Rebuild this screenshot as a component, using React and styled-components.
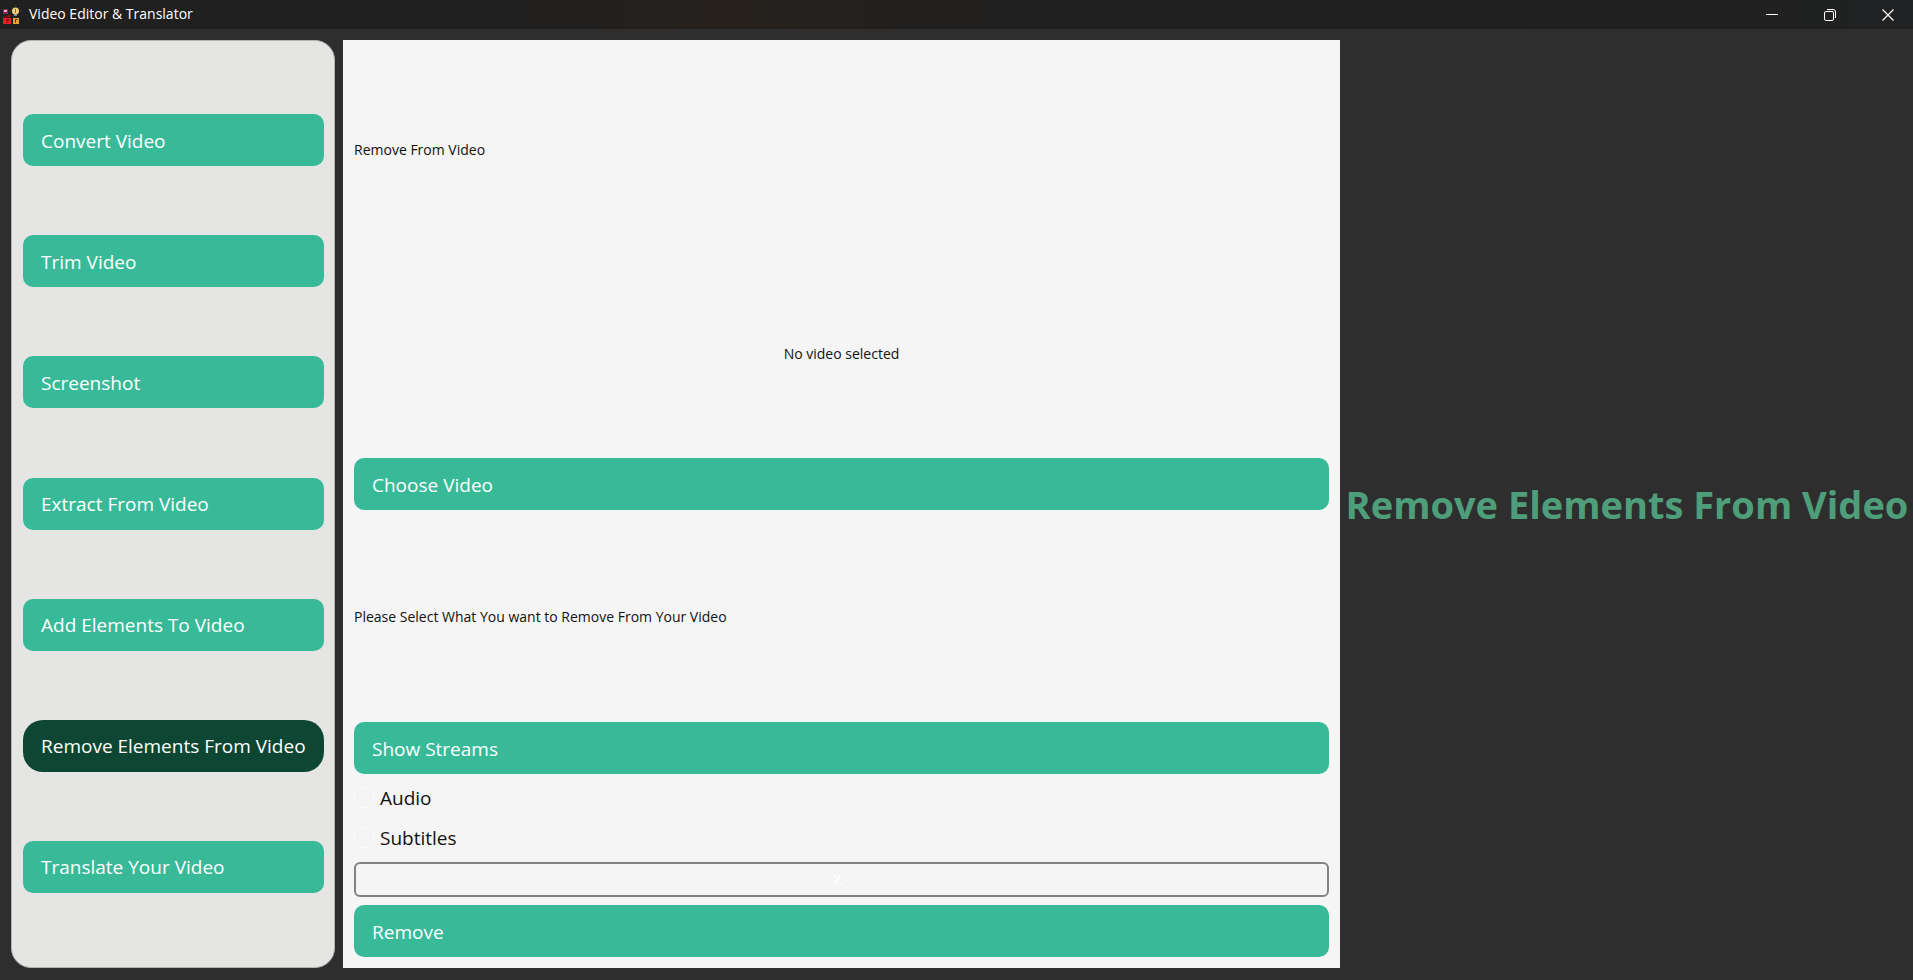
import React from "react";
import styled, { createGlobalStyle } from "styled-components";

const GlobalStyle = createGlobalStyle`
  *, *::before, *::after { box-sizing: border-box; }
  body {
    margin: 0;
    background: #2e2e2e;
    font-family: "Open Sans", "Noto Sans", sans-serif;
    color: #111;
  }
`;

const Window = styled.div`
  display: flex;
  flex-direction: column;
  min-height: 100vh;
`;

const TitleBar = styled.header`
  display: flex;
  align-items: center;
  height: 29px;
  padding-left: 2px;
  gap: 7px;
  background: linear-gradient(90deg, #202020 0%, #202020 25%, #25201c 38%, #202020 55%, #202122 100%);
  color: #fff;
`;

const WindowTitle = styled.h1`
  margin: 0;
  flex: 1;
  padding-bottom: 1px;
  font-size: 14px;
  font-weight: 400;
  line-height: 20px;
`;

const WindowControls = styled.div`
  display: flex;
  gap: 8px;
`;

const ControlButton = styled.button`
  display: flex;
  align-items: center;
  justify-content: center;
  width: 50px;
  height: 29px;
  padding: 0;
  border: 0;
  background: transparent;
  color: #fff;
`;

const Workspace = styled.div`
  flex: 1;
  display: flex;
  gap: 8px;
  padding: 11px 7px 12px 11px;
`;

const Sidebar = styled.nav`
  flex: 0 0 324px;
  min-width: 0;
  display: flex;
  flex-direction: column;
  justify-content: space-evenly;
  padding: 4px 10px 5px 11px;
  border: 1px solid #b4b4b2;
  border-radius: 20px;
  background: #e5e5e3;
`;

const ActionButton = styled.button`
  flex: none;
  height: 52px;
  padding: 1px 16px 0 18px;
  border: 0;
  border-radius: ${(p) => (p.$active ? 20 : 10)}px;
  background: ${(p) => (p.$active ? "#0d4733" : "#38ba99")};
  color: #fff;
  font-family: inherit;
  font-size: 19px;
  font-weight: 400;
  line-height: 28px;
  text-align: left;
  white-space: nowrap;
`;

const Panel = styled.main`
  flex: 1;
  display: flex;
  flex-direction: column;
  gap: 8px;
  padding: 11px;
  background: #f5f5f5;
`;

const Message = styled.p`
  flex: 1;
  display: flex;
  align-items: center;
  justify-content: ${(p) => (p.$centered ? "center" : "flex-start")};
  margin: 0;
  padding-top: 2px;
  font-size: 14px;
  line-height: 20px;
`;

const CheckRow = styled.label`
  display: flex;
  align-items: center;
  gap: 6px;
  height: 32px;
  font-size: 19px;
  line-height: 28px;
`;

const CheckBox = styled.input`
  appearance: none;
  width: 20px;
  height: 20px;
  margin: 0;
  border: 1px solid #fbfbfb;
  border-radius: 6px;
`;

const ProgressTrack = styled.div`
  display: flex;
  align-items: center;
  justify-content: center;
  height: 35px;
  border: 2px solid #828282;
  border-radius: 6px;
  color: #fff;
  font-family: "DejaVu Sans", sans-serif;
  font-size: 16px;
  line-height: 20px;
`;

const Aside = styled.aside`
  flex: 0 0 558px;
  min-width: 0;
  display: flex;
  align-items: center;
  justify-content: center;
`;

const PageTitle = styled.h2`
  margin: 0;
  color: #4f9e7b;
  font-size: 38px;
  font-weight: 700;
  line-height: 56px;
  white-space: nowrap;
`;

const AppLogo = () => (
  <svg width="20" height="20" viewBox="0 0 20 20" aria-hidden="true">
    <rect x="1" y="4" width="5" height="5" fill="#a8124f" />
    <rect x="2" y="5" width="3" height="2" fill="#e9b6c8" />
    <path d="M13.500 0v1M8.500 6h1M18 6h2M9.500 2l1 1M18 2l-1 1" stroke="#463c28" strokeWidth="1" />
    <circle cx="13.500" cy="6" r="3.500" fill="#f3cf7c" />
    <path d="M13.500 4v4" stroke="#8b6a3a" />
    <rect x="12" y="9" width="3" height="2" fill="#8a8f96" />
    <path d="M1 11.500l8-2v2l-8 2z" fill="#8e1118" />
    <rect x="1" y="13" width="8" height="6" fill="#e01f26" />
    <path d="M2 11v2M5 10.500v2M4 15h3M5 17h1" stroke="#4f070b" />
    <rect x="11" y="13" width="6" height="6" fill="#f0a030" />
    <path d="M13.500 17.500v-3h2" fill="none" stroke="#4d3208" />
  </svg>
);

const MinimizeIcon = () => (
  <svg width="12" height="12" viewBox="0 0 12 12" aria-hidden="true">
    <path d="M0 5.500h12" stroke="currentColor" />
  </svg>
);

const RestoreIcon = () => (
  <svg width="12" height="12" viewBox="0 0 12 12" fill="none" stroke="currentColor" aria-hidden="true">
    <rect x="0.500" y="2.500" width="9" height="9" rx="1.500" />
    <path d="M3 0.500h6a2.500 2.500 0 0 1 2.500 2.500v6" />
  </svg>
);

const CloseIcon = () => (
  <svg width="12" height="12" viewBox="0 0 12 12" aria-hidden="true">
    <path d="M0.500 0.500l11 11M11.500 0.500l-11 11" stroke="currentColor" strokeWidth="1.200" />
  </svg>
);

const tools = [
  "Convert Video",
  "Trim Video",
  "Screenshot",
  "Extract From Video",
  "Add Elements To Video",
  "Remove Elements From Video",
  "Translate Your Video",
];

const activeTool = "Remove Elements From Video";

export default function App() {
  return (
    <>
      <GlobalStyle />
      <Window>
        <TitleBar>
          <AppLogo />
          <WindowTitle>Video Editor &amp; Translator</WindowTitle>
          <WindowControls>
            <ControlButton aria-label="Minimize"><MinimizeIcon /></ControlButton>
            <ControlButton aria-label="Restore"><RestoreIcon /></ControlButton>
            <ControlButton aria-label="Close"><CloseIcon /></ControlButton>
          </WindowControls>
        </TitleBar>
        <Workspace>
          <Sidebar>
            {tools.map((tool) => (
              <ActionButton key={tool} $active={tool === activeTool}>{tool}</ActionButton>
            ))}
          </Sidebar>
          <Panel>
            <Message>Remove From Video</Message>
            <Message $centered>No video selected</Message>
            <ActionButton>Choose Video</ActionButton>
            <Message>Please Select What You want to Remove From Your Video</Message>
            <ActionButton>Show Streams</ActionButton>
            <CheckRow><CheckBox type="checkbox" />Audio</CheckRow>
            <CheckRow><CheckBox type="checkbox" />Subtitles</CheckRow>
            <ProgressTrack role="progressbar" aria-label="Progress" aria-valuenow={0} aria-valuemin={0} aria-valuemax={100}>٪٠</ProgressTrack>
            <ActionButton>Remove</ActionButton>
          </Panel>
          <Aside>
            <PageTitle>{activeTool}</PageTitle>
          </Aside>
        </Workspace>
      </Window>
    </>
  );
}
